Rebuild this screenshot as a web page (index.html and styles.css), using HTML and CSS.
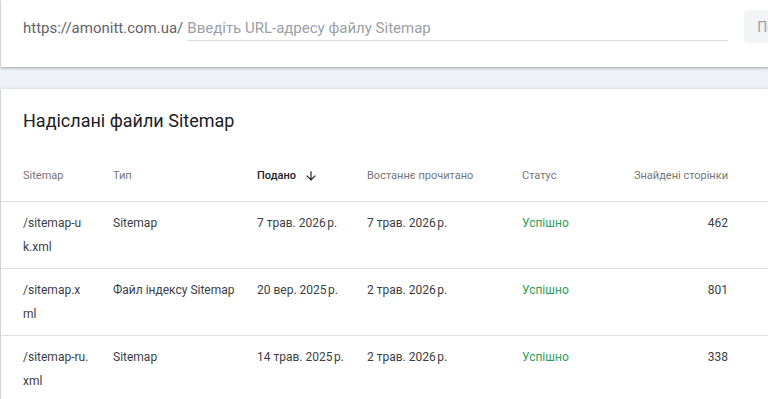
FILE: index.html
```html
<!DOCTYPE html>
<html lang="uk">
<head>
<meta charset="utf-8">
<link rel="stylesheet" href="styles.css">
</head>
<body>
<div class="page">
  <section class="card add-card">
    <div class="add-row">
      <span class="prefix">https://amonitt.com.ua/</span>
      <div class="input-wrap"><span class="placeholder">Введіть URL-адресу файлу Sitemap</span></div>
      <button class="submit">Подати</button>
    </div>
  </section>
  <section class="card list-card">
    <h2 class="title">Надіслані файли Sitemap</h2>
    <div class="table">
      <div class="row head">
        <div class="c c1">Sitemap</div>
        <div class="c">Тип</div>
        <div class="c sorted">Подано <svg class="arrow" viewBox="0 0 24 24" width="14" height="14"><path d="M20 12l-1.41-1.41L13 16.17V4h-2v12.17l-5.58-5.59L4 12l8 8 8-8z" fill="#202124"/></svg></div>
        <div class="c">Востаннє прочитано</div>
        <div class="c">Статус</div>
        <div class="c num">Знайдені сторінки</div>
      </div>
      <div class="row">
        <div class="c c1">/sitemap-u<br>k.xml</div>
        <div class="c">Sitemap</div>
        <div class="c">7 трав. 2026&#8239;р.</div>
        <div class="c">7 трав. 2026&#8239;р.</div>
        <div class="c ok">Успішно</div>
        <div class="c num">462</div>
      </div>
      <div class="row">
        <div class="c c1">/sitemap.x<br>ml</div>
        <div class="c">Файл індексу Sitemap</div>
        <div class="c">20 вер. 2025&#8239;р.</div>
        <div class="c">2 трав. 2026&#8239;р.</div>
        <div class="c ok">Успішно</div>
        <div class="c num">801</div>
      </div>
      <div class="row">
        <div class="c c1">/sitemap-ru.<br>xml</div>
        <div class="c">Sitemap</div>
        <div class="c">14 трав. 2025&#8239;р.</div>
        <div class="c">2 трав. 2026&#8239;р.</div>
        <div class="c ok">Успішно</div>
        <div class="c num">338</div>
      </div>
    </div>
  </section>
</div>
</body>
</html>
```

FILE: styles.css
```css
* { box-sizing: border-box; }
html, body { margin: 0; padding: 0; }
body {
  background: #eef1f5;
  font-family: Roboto, "Noto Sans", Arial, sans-serif;
  color: #3c4043;
  overflow: hidden;
}
.page {
  padding-left: 1px;
}
.card {
  background: #fff;
  box-shadow: 0 1px 2px rgba(60,64,67,0.3), 0 1px 3px 1px rgba(60,64,67,0.12);
}
.add-card {
  height: 67px;
  padding: 10px 0 0 22px;
  margin-bottom: 22px;
  overflow: hidden;
}
.add-row {
  display: flex;
  align-items: flex-start;
}
.prefix {
  flex: none;
  font-size: 15px;
  line-height: 32px;
  padding-top: 2px;
  color: #5f6368;
  margin-right: 4px;
}
.input-wrap {
  flex: none;
  width: 541px;
  height: 31px;
  padding-top: 2px;
  border-bottom: 1px solid #dadce0;
}
.placeholder {
  font-size: 15px;
  line-height: 32px;
  color: #9aa0a6;
}
.submit {
  flex: none;
  margin-left: 16px;
  width: 80px;
  height: 33px;
  border: none;
  border-radius: 4px;
  background: #f1f3f4;
  color: #9aa0a6;
  font-family: inherit;
  font-size: 14px;
  text-align: left;
  padding-left: 13px;
}
.list-card {
  padding-top: 20px;
  min-height: 320px;
}
.title {
  margin: 0 0 0 22px;
  font-size: 18px;
  line-height: 24px;
  font-weight: 400;
  color: #202124;
}
.table {
  margin-top: 15px;
}
.row {
  display: grid;
  grid-template-columns: 90px 144px 110px 155px 1fr 130px;
  padding: 9px 40px 9px 22px;
  border-top: 1px solid #e0e0e0;
  font-size: 12px;
  line-height: 24px;
  color: #3c4043;
}
.row + .row + .row { padding-top: 9px; }
.row.head {
  border-top: none;
  padding: 16px 40px 13px 22px;
  font-size: 11px;
  color: #757575;
}
.c1 {
  padding-right: 20px;
  white-space: nowrap;
}
.sorted {
  color: #202124;
  font-weight: 500;
  display: flex;
  align-items: center;
  gap: 8px;
}
.arrow { display: block; }
.ok { color: #2e9e5b; }
.num { text-align: right; }
```
